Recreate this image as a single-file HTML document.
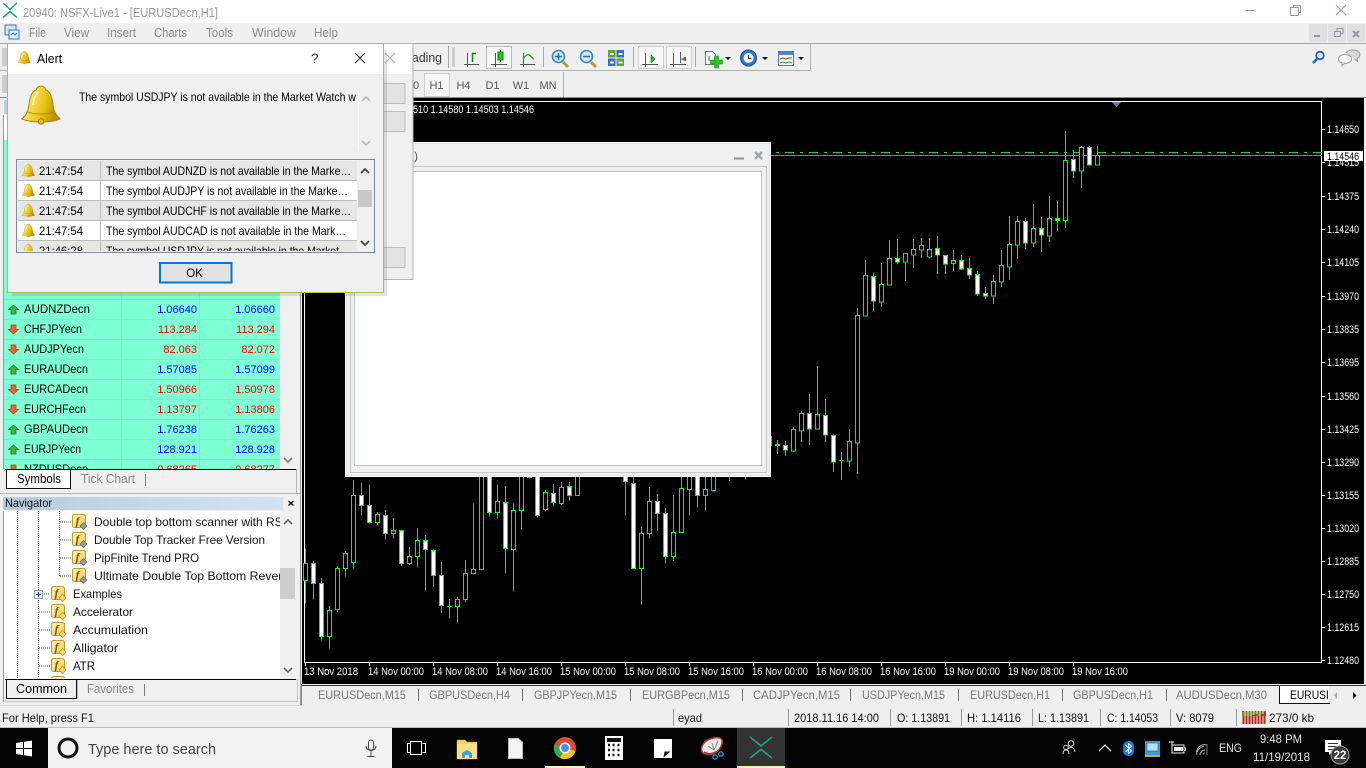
<!DOCTYPE html>
<html lang="en"><head><meta charset="utf-8"><title>20940: NSFX-Live1 - [EURUSDecn,H1]</title>
<style>
html,body{margin:0;padding:0;width:1366px;height:768px;overflow:hidden;background:#f0f0f0}
svg{display:block}
text{font-family:"Liberation Sans",Arial,sans-serif;font-size:12px;fill:#000}
.m{fill:#8c8c8c;font-size:12.5px}
.tf{fill:#555;font-size:11px;text-anchor:middle}
.ax text{fill:#fff;font-size:11px}
.mw{font-size:11.5px}
.bl{fill:#0000ff;font-size:11px;text-anchor:end}
.rd{fill:#ff0000;font-size:11px;text-anchor:end}
.tb{fill:#777;font-size:12px}
.st{fill:#111;font-size:12px}
.nv{font-size:12px;fill:#111}
</style></head><body>
<svg width="1366" height="768" viewBox="0 0 1366 768" xmlns="http://www.w3.org/2000/svg">
<defs>
<linearGradient id="gb" x1="0" y1="0" x2="1" y2="0.3"><stop offset="0" stop-color="#e9c92e"/><stop offset=".3" stop-color="#fbe35c"/><stop offset=".7" stop-color="#e8bf14"/><stop offset="1" stop-color="#c09206"/></linearGradient>
<linearGradient id="hd" x1="0" y1="0" x2="1" y2="0"><stop offset="0" stop-color="#b7cbdf"/><stop offset="1" stop-color="#d3e3f2"/></linearGradient>
<linearGradient id="fi" x1="0" y1="0" x2="1" y2="1"><stop offset="0" stop-color="#fff6c0"/><stop offset="1" stop-color="#f2c84a"/></linearGradient>
<g id="bell"><path d="M19 0c3 0 4 2 5 4 5 2 6 8 7 15 1 7 3 10 7 14-5 2-11 3-19 3S5 35 0 33c4-4 6-7 7-14 1-7 2-13 7-15 1-2 2-4 5-4z" fill="url(#gb)" stroke="#a88300"/><circle cx="19" cy="35.500" r="2.800" fill="#e3b91e" stroke="#a88300"/><path d="M5.500 26c8 2.600 19 2.600 27 0" fill="none" stroke="#b38f0c"/><path d="M11 19c.5-6 2-10 5-13" fill="none" stroke="#fff8c8" stroke-width="2"/></g>
<g id="fg"><rect x=".5" y=".5" width="13" height="13" rx="2" fill="url(#fi)" stroke="#c29a2c"/><text x="3.500" y="11" style="font-family:'Liberation Serif',serif;font-style:italic;font-size:12px;font-weight:bold;fill:#7a5a10">f</text><path d="M11.500 8.500l3.500 3.500-3.500 3.500-3.500-3.500z" fill="#9a9a9a" stroke="#666" stroke-width=".7"/></g>
<g id="fo"><rect x=".5" y=".5" width="13" height="13" rx="2" fill="url(#fi)" stroke="#c29a2c"/><text x="3.500" y="11" style="font-family:'Liberation Serif',serif;font-style:italic;font-size:12px;font-weight:bold;fill:#7a5a10">f</text><path d="M11.500 8.500l3.500 3.500-3.500 3.500-3.500-3.500z" fill="#f6d868" stroke="#c09428" stroke-width=".8"/></g>
<path id="up" d="M5.500 0l5 4.500H8V9H3V4.500H.5z" fill="#45b045" stroke="#1d6f1d" stroke-width=".7"/>
<path id="dn" d="M3 0h5v4.500h2.500l-5 4.500-5-4.500H3z" fill="#f4602a" stroke="#b63a12" stroke-width=".7"/>
<clipPath id="cl"><rect x="17" y="161" width="340" height="90"/></clipPath>
<clipPath id="cm"><rect x="4" y="290" width="276" height="179"/></clipPath>
<clipPath id="ctab"><rect x="1280" y="686" width="48" height="18"/></clipPath>
<clipPath id="cnv"><rect x="4" y="511" width="276" height="167"/></clipPath>
</defs>

<rect width="1366" height="768" fill="#f0f0f0"/>

<!-- title bar -->
<rect width="1366" height="23" fill="#fff"/>
<path d="M3 3l7 6.500L17 3M3 17.500l7-6 7 6" fill="none" stroke="#1ea57f" stroke-width="1.500"/>
<text x="23" y="17" textLength="195" lengthAdjust="spacingAndGlyphs" style="fill:#999;font-size:13px">20940: NSFX-Live1 - [EURUSDecn,H1]</text>
<path d="M1245 10.500h10" stroke="#999" fill="none"/>
<path d="M1290.500 7.500h8v8h-8zM1293.500 7V5.500h7v7h-2" stroke="#999" fill="none"/>
<path d="M1336 5l10 10M1346 5l-10 10" stroke="#999" fill="none"/>

<!-- menu -->
<rect y="23" width="1366" height="20" fill="#efefef"/>
<rect x="5" y="25" width="11" height="10" fill="#cfe3f5" stroke="#3f77b5"/><rect x="9" y="30" width="10" height="9" fill="#dcebf8" stroke="#3f77b5"/><path d="M11 35l2-2 2 2 2-2" stroke="#3f77b5" fill="none"/>
<text class="m" x="29" y="37" textLength="17" lengthAdjust="spacingAndGlyphs">File</text>
<text class="m" x="64" y="37" textLength="25" lengthAdjust="spacingAndGlyphs">View</text>
<text class="m" x="107" y="37" textLength="29" lengthAdjust="spacingAndGlyphs">Insert</text>
<text class="m" x="154" y="37" textLength="33" lengthAdjust="spacingAndGlyphs">Charts</text>
<text class="m" x="206" y="37" textLength="27" lengthAdjust="spacingAndGlyphs">Tools</text>
<text class="m" x="252" y="37" textLength="44" lengthAdjust="spacingAndGlyphs">Window</text>
<text class="m" x="314" y="37" textLength="24" lengthAdjust="spacingAndGlyphs">Help</text>
<rect x="1309" y="24" width="18" height="18" fill="#e0e0e0"/><rect x="1328" y="24" width="18" height="18" fill="#e0e0e0"/><rect x="1347" y="24" width="18" height="18" fill="#e0e0e0"/>
<path d="M1314 36h6" stroke="#8a99a8" stroke-width="2"/><path d="M1334.500 31.500h6v5h-6zM1337 31v-2.500h6v5h-2" stroke="#8a99a8" fill="none"/><path d="M1353 31l6 6M1359 31l-6 6" stroke="#8a99a8" stroke-width="2"/>
<rect y="43" width="1366" height="1" fill="#a6a6a6"/>

<!-- toolbars -->
<rect y="44" width="1366" height="54" fill="#efefef"/>
<path d="M0 70.500H810.500V44" stroke="#b0b0b0" fill="none"/>
<path d="M563.500 72V97" stroke="#b0b0b0"/>
<rect y="97" width="1366" height="1" fill="#8a8a8a"/>
<path d="M2 49h5M2 51h5M2 53h5M2 55h5M2 57h5M2 59h5M2 61h5M2 63h5M2 65h5M2 76h5M2 78h5M2 80h5M2 82h5M2 84h5M2 86h5M2 88h5M2 90h5M2 92h5" stroke="#aaa" fill="none"/>
<text x="412" y="62" textLength="30" lengthAdjust="spacingAndGlyphs" style="fill:#333;font-size:12.500px">ading</text>
<path d="M448.500 46V68M543.500 47V67M633.500 47V67M695.500 47V67" stroke="#aaa" fill="none"/>
<path d="M452 48h3M452 50h3M452 52h3M452 54h3M452 56h3M452 58h3M452 60h3M452 62h3M452 64h3M452 66h3" stroke="#aaa" fill="none"/>
<!-- bar icon -->
<path d="M467.500 53V67M464 64.500H479" stroke="#555" fill="none"/><path d="M472.500 62V53.500H476" stroke="#0a8a0a" stroke-width="1.500" fill="none"/>
<!-- candle selected -->
<rect x="486.500" y="46.500" width="25" height="22" fill="#f7f7f7" stroke="#bbb"/>
<path d="M495.500 53V67M491 64.500H507" stroke="#555" fill="none"/><path d="M500.500 50V62" stroke="#0a8a0a"/><rect x="498" y="52" width="5" height="8" fill="#22c322" stroke="#0a8a0a"/>
<!-- line icon -->
<path d="M523.500 53V67M520 64.500H535" stroke="#555" fill="none"/><path d="M523 59c2-3 4-5 6-4s3 3 5 4" stroke="#2d9a3d" stroke-width="1.300" fill="none"/>
<!-- zoom -->
<g><path d="M563 62l5 5" stroke="#b89a3a" stroke-width="3"/><circle cx="558.500" cy="56.500" r="6" fill="#cfe6f8" stroke="#3a86c8" stroke-width="1.600"/><path d="M555 56.500h7M558.500 53v7" stroke="#2b6aa8" stroke-width="1.500"/></g>
<g><path d="M591 62l5 5" stroke="#b89a3a" stroke-width="3"/><circle cx="586.500" cy="56.500" r="6" fill="#cfe6f8" stroke="#3a86c8" stroke-width="1.600"/><path d="M583 56.500h7" stroke="#2b6aa8" stroke-width="1.500"/></g>
<!-- tile -->
<rect x="608" y="50" width="7.500" height="7.500" fill="#5aa82a"/><rect x="616.500" y="50" width="7.500" height="7.500" fill="#2e6fd0"/><rect x="608" y="58.500" width="7.500" height="7.500" fill="#2e6fd0"/><rect x="616.500" y="58.500" width="7.500" height="7.500" fill="#5aa82a"/>
<path d="M610 54h4M618.500 54h4M610 62.500h4M618.500 62.500h4" stroke="#fff" stroke-width="2"/>
<!-- chart shift -->
<rect x="638.500" y="46.500" width="25" height="22" fill="#f7f7f7" stroke="#ccc"/>
<path d="M645.500 53V67M642 64.500H658" stroke="#555" fill="none"/><path d="M651 55l4 4-4 4z" fill="#22b322" stroke="#0a8a0a" stroke-width=".6"/>
<rect x="666.500" y="46.500" width="25" height="22" fill="#f7f7f7" stroke="#ccc"/>
<path d="M673.500 53V67M670 64.500H686" stroke="#555" fill="none"/><path d="M680.500 52V63" stroke="#2b6aa8"/><path d="M681 59l5-2.500v5z" fill="#c8401a"/>
<!-- new chart -->
<path d="M705.500 51.500h7l3 3v10h-10z" fill="#fff" stroke="#777"/><path d="M709 56v5" stroke="#555"/>
<path d="M714 57h4v4h4v4h-4v4h-4v-4h-4v-4h4z" fill="#2fc02f" stroke="#0f8a0f" stroke-width=".6" transform="translate(.5 -1)"/>
<path d="M725 57h6l-3 3z M762 57h6l-3 3z M798 57h6l-3 3z" fill="#111"/>
<!-- clock -->
<circle cx="748.500" cy="58" r="8" fill="#2a78c8" stroke="#154f90"/><circle cx="748.500" cy="58" r="5" fill="#f4f4f4"/><path d="M748.500 55v3.500h3" stroke="#333" fill="none"/>
<!-- template -->
<rect x="778.500" y="51.500" width="15" height="14" fill="#f4f8fc" stroke="#4a7fb5"/><rect x="779" y="52" width="14" height="3" fill="#4a86c8"/><path d="M780 59l3-1 3 1 3-1 3 0" stroke="#a03c1c" fill="none"/><path d="M780 63l3-1 3 1 3-1 3 1" stroke="#2d9a3d" fill="none"/>
<!-- timeframes -->
<rect x="424.500" y="73.500" width="25" height="23" fill="#f7f7f7" stroke="#ccc"/>
<text class="tf" x="436.500" y="89">H1</text><text class="tf" x="463.500" y="89">H4</text><text class="tf" x="492.500" y="89">D1</text><text class="tf" x="521" y="89">W1</text><text class="tf" x="548" y="89">MN</text>
<!-- right icons -->
<circle cx="1320" cy="55.500" r="3.800" fill="#dfeafa" stroke="#2a62c0" stroke-width="1.800"/><path d="M1317 59l-4 4" stroke="#2a62c0" stroke-width="2.500"/>
<path d="M1346 53c1-2 4-3 7-3 4 0 7 2 7 4.500 0 2-1 3-3 4l.5 3-3-2.500" fill="#d8d8d8" stroke="#999"/><ellipse cx="1345" cy="59" rx="6.500" ry="4.500" fill="#f6f6f6" stroke="#999"/><path d="M1342 63v2.500l3-2.500" fill="#f6f6f6" stroke="#999"/>

<!-- chart -->
<rect x="302" y="98" width="1062" height="586" fill="#000"/>
<path d="M304.500 101.500H1321.500V662.500H304.500Z" fill="none" stroke="#fff"/>
<path d="M1112 102h9l-4.500 5z" fill="#708090"/>
<text x="413" y="113" textLength="121" lengthAdjust="spacingAndGlyphs" style="fill:#fff;font-size:11px">510 1.14580 1.14503 1.14546</text>
<path d="M761 152.500H1322" stroke="#14d814" stroke-dasharray="9 6 3 6" fill="none"/>
<path d="M304 155.500H1322" stroke="#808080" fill="none"/>

<g transform="translate(760.170 120.170) scale(.33333)" stroke="#00ff00" stroke-width="3" shape-rendering="crispEdges">
<path fill="none" d="M1012 78V136M988 78V134M964 78V203M940 90V173M916 33V323M892 243V333M868 228V365M844 291V395M820 252V380M796 294V386M772 288V416M748 288V479M724 390V500M700 465V551M676 501V537M652 453V527M628 414V476M604 405V449M580 390V452M556 406V461M532 348V461M508 354V413M484 354V413M460 357V443M436 400V482M412 357V431M388 360V494M364 429V560M340 457V572M316 420V587M292 564V1061M268 927V1040M244 996V1079M220 943V1055M196 837V965M172 738V926M148 822V974M124 873V965M100 921V995M76 963V1007M52 960V1001M34 948V978M238 1021h12"/>
<path fill="#000" d="M1006 106h12v28h-12zM958 82h12v70h-12zM910 121h12v180h-12zM862 295h12v52h-12zM814 325h12v43h-12zM766 304h12v70h-12zM742 373h12v67h-12zM718 436h12v49h-12zM694 484h12v43h-12zM574 421h12v9h-12zM502 388h12v22h-12zM478 376h12v13h-12zM454 388h12v16h-12zM430 400h12v25h-12zM382 415h12v79h-12zM358 493h12v52h-12zM310 466h12v121h-12zM286 586h12v382h-12zM262 964h12v58h-12zM166 883h12v43h-12zM118 880h12v52h-12zM94 928h12v64h-12z"/>
<path fill="#fff" d="M982 82h12v52h-12zM934 118h12v34h-12zM886 295h12v6h-12zM838 325h12v19h-12zM790 304h12v64h-12zM670 520h12v7h-12zM646 463h12v58h-12zM622 445h12v19h-12zM598 421h12v25h-12zM550 406h12v25h-12zM526 385h12v19h-12zM406 415h12v10h-12zM334 469h12v73h-12zM214 946h12v79h-12zM190 886h12v58h-12zM142 880h12v46h-12zM70 976h12v13h-12zM46 973h12v3h-12z"/>
</g>
<g transform="translate(300.170 470) scale(.33333)" stroke="#00ff00" stroke-width="3" shape-rendering="crispEdges">
<path fill="none" d="M16 235V400M40 273V389M64 324V512M88 408V536M112 288V428M136 243V320M160 30V296M184 38V137M208 44V160M232 126V165M256 120V209M280 144V206M304 180V290M328 231V285M352 174V293M376 195V362M400 238V351M424 276V429M448 387V446M472 379V458M496 270V398M520 101V313M544 0V299M568 0V140M592 44V146M616 48V311M640 100V365M664 0V179M688 0V25M712 0V143M736 60V125M760 42V110M784 36V105M808 36V92M832 0V76M976 0V137M1000 0V296M1024 170V404M1048 51V206M1072 72V183M1096 114V281M1120 75V273M1144 0V187M1168 0V137M1192 0V112M1216 20V122M1240 0V62M1288 0V33M1336 0V29M442 409h12"/>
<path fill="#000" d="M10 280h12v52h-12zM82 421h12v79h-12zM106 295h12v124h-12zM130 250h12v46h-12zM154 76h12v201h-12zM226 133h12v25h-12zM274 181h12v9h-12zM322 259h12v22h-12zM346 211h12v49h-12zM466 388h12v22h-12zM490 310h12v79h-12zM514 298h12v12h-12zM538 0h12v299h-12zM586 94h12v34h-12zM634 121h12v118h-12zM658 0h12v122h-12zM730 67h12v52h-12zM778 52h12v49h-12zM826 0h12v76h-12zM1018 190h12v106h-12zM1042 94h12v96h-12zM1114 187h12v72h-12zM1138 55h12v132h-12zM1162 0h12v58h-12zM1210 58h12v18h-12zM1234 0h12v62h-12z"/>
<path fill="#fff" d="M34 280h12v61h-12zM58 340h12v159h-12zM178 76h12v31h-12zM202 106h12v52h-12zM250 136h12v54h-12zM298 181h12v100h-12zM370 211h12v27h-12zM394 241h12v75h-12zM418 316h12v90h-12zM562 0h12v127h-12zM610 97h12v138h-12zM682 0h12v22h-12zM706 0h12v136h-12zM754 70h12v28h-12zM802 49h12v27h-12zM970 0h12v34h-12zM994 40h12v256h-12zM1066 94h12v36h-12zM1090 130h12v129h-12zM1186 0h12v76h-12z"/>
</g>

<!-- axes -->
<g class="ax">
<path d="M1322 129.500h3M1322 162.500h3M1322 196.500h3M1322 229.500h3M1322 262.500h3M1322 296.500h3M1322 329.500h3M1322 362.500h3M1322 396.500h3M1322 429.500h3M1322 462.500h3M1322 495.500h3M1322 528.500h3M1322 561.500h3M1322 594.500h3M1322 627.500h3M1322 660.500h3M305.500 663v3M369.500 663v3M433.500 663v3M497.500 663v3M561.500 663v3M625.500 663v3M689.500 663v3M753.500 663v3M817.500 663v3M881.500 663v3M945.500 663v3M1009.500 663v3M1073.500 663v3" stroke="#fff" fill="none"/>
<text x="1327" y="133" textLength="32" lengthAdjust="spacingAndGlyphs">1.14650</text>
<text x="1327" y="166" textLength="32" lengthAdjust="spacingAndGlyphs">1.14515</text>
<text x="1327" y="200" textLength="32" lengthAdjust="spacingAndGlyphs">1.14375</text>
<text x="1327" y="233" textLength="32" lengthAdjust="spacingAndGlyphs">1.14240</text>
<text x="1327" y="266" textLength="32" lengthAdjust="spacingAndGlyphs">1.14105</text>
<text x="1327" y="300" textLength="32" lengthAdjust="spacingAndGlyphs">1.13970</text>
<text x="1327" y="333" textLength="32" lengthAdjust="spacingAndGlyphs">1.13835</text>
<text x="1327" y="366" textLength="32" lengthAdjust="spacingAndGlyphs">1.13695</text>
<text x="1327" y="400" textLength="32" lengthAdjust="spacingAndGlyphs">1.13560</text>
<text x="1327" y="433" textLength="32" lengthAdjust="spacingAndGlyphs">1.13425</text>
<text x="1327" y="466" textLength="32" lengthAdjust="spacingAndGlyphs">1.13290</text>
<text x="1327" y="499" textLength="32" lengthAdjust="spacingAndGlyphs">1.13155</text>
<text x="1327" y="532" textLength="32" lengthAdjust="spacingAndGlyphs">1.13020</text>
<text x="1327" y="565" textLength="32" lengthAdjust="spacingAndGlyphs">1.12885</text>
<text x="1327" y="598" textLength="32" lengthAdjust="spacingAndGlyphs">1.12750</text>
<text x="1327" y="631" textLength="32" lengthAdjust="spacingAndGlyphs">1.12615</text>
<text x="1327" y="664" textLength="32" lengthAdjust="spacingAndGlyphs">1.12480</text>
<text x="304" y="675" textLength="54" lengthAdjust="spacingAndGlyphs">13 Nov 2018</text>
<text x="368" y="675" textLength="56" lengthAdjust="spacingAndGlyphs">14 Nov 00:00</text>
<text x="432" y="675" textLength="56" lengthAdjust="spacingAndGlyphs">14 Nov 08:00</text>
<text x="496" y="675" textLength="56" lengthAdjust="spacingAndGlyphs">14 Nov 16:00</text>
<text x="560" y="675" textLength="56" lengthAdjust="spacingAndGlyphs">15 Nov 00:00</text>
<text x="624" y="675" textLength="56" lengthAdjust="spacingAndGlyphs">15 Nov 08:00</text>
<text x="688" y="675" textLength="56" lengthAdjust="spacingAndGlyphs">15 Nov 16:00</text>
<text x="752" y="675" textLength="56" lengthAdjust="spacingAndGlyphs">16 Nov 00:00</text>
<text x="816" y="675" textLength="56" lengthAdjust="spacingAndGlyphs">16 Nov 08:00</text>
<text x="880" y="675" textLength="56" lengthAdjust="spacingAndGlyphs">16 Nov 16:00</text>
<text x="944" y="675" textLength="56" lengthAdjust="spacingAndGlyphs">19 Nov 00:00</text>
<text x="1008" y="675" textLength="56" lengthAdjust="spacingAndGlyphs">19 Nov 08:00</text>
<text x="1072" y="675" textLength="56" lengthAdjust="spacingAndGlyphs">19 Nov 16:00</text>
</g>
<rect x="1324" y="151" width="39" height="10" fill="#fff"/>
<text x="1327" y="160" textLength="32" lengthAdjust="spacingAndGlyphs" style="fill:#000;font-size:11px">1.14546</text>

<!-- floating chart window -->
<rect x="345.500" y="142.500" width="425" height="334" fill="#f0f0f0" stroke="#fff"/>
<rect x="346.500" y="143.500" width="423" height="332" fill="none" stroke="#e3e3e3"/>
<rect x="350.500" y="166.500" width="416" height="306" fill="#f0f0f0" stroke="#c6c6c6"/>
<rect x="354.500" y="171.500" width="407" height="294" fill="#fff" stroke="#b7c4d0"/>
<path d="M734 158.500h10" stroke="#8f8f8f" stroke-width="2"/>
<path d="M755 152l7 7M762 152l-7 7" stroke="#9aa7b1" stroke-width="2.500"/>
<text x="406" y="160" style="fill:#555;font-size:12px">S)</text>

<!-- left panel -->
<rect x="0" y="98" width="302" height="610" fill="#f0f0f0"/>
<path d="M300.500 98V705" stroke="#9a9a9a" fill="none"/>
<rect x="4" y="100" width="6" height="14" fill="#c3ced9"/>
<rect x="3" y="115" width="8" height="25" fill="#fff"/>
<path d="M3.500 115V469" stroke="#999"/>
<rect x="4" y="140" width="276" height="329" fill="#7fffd4"/>
<path d="M4 299.500H280M4 319.500H280M4 339.500H280M4 359.500H280M4 379.500H280M4 399.500H280M4 419.500H280M4 439.500H280M4 459.500H280M121.500 290V469M199.500 290V469" stroke="#c3c9c9" fill="none"/>
<g clip-path="url(#cm)">
<use href="#up" x="8" y="305"/><text class="mw" x="24" y="313" textLength="66" lengthAdjust="spacingAndGlyphs">AUDNZDecn</text><text class="bl" x="197" y="313">1.06640</text><text class="bl" x="275" y="313">1.06660</text>
<use href="#dn" x="8" y="325"/><text class="mw" x="24" y="333" textLength="58" lengthAdjust="spacingAndGlyphs">CHFJPYecn</text><text class="rd" x="197" y="333">113.284</text><text class="rd" x="275" y="333">113.294</text>
<use href="#dn" x="8" y="345"/><text class="mw" x="24" y="353" textLength="60" lengthAdjust="spacingAndGlyphs">AUDJPYecn</text><text class="rd" x="197" y="353">82.063</text><text class="rd" x="275" y="353">82.072</text>
<use href="#up" x="8" y="365"/><text class="mw" x="24" y="373" textLength="64" lengthAdjust="spacingAndGlyphs">EURAUDecn</text><text class="bl" x="197" y="373">1.57085</text><text class="bl" x="275" y="373">1.57099</text>
<use href="#dn" x="8" y="385"/><text class="mw" x="24" y="393" textLength="64" lengthAdjust="spacingAndGlyphs">EURCADecn</text><text class="rd" x="197" y="393">1.50966</text><text class="rd" x="275" y="393">1.50978</text>
<use href="#dn" x="8" y="405"/><text class="mw" x="24" y="413" textLength="62" lengthAdjust="spacingAndGlyphs">EURCHFecn</text><text class="rd" x="197" y="413">1.13797</text><text class="rd" x="275" y="413">1.13806</text>
<use href="#up" x="8" y="425"/><text class="mw" x="24" y="433" textLength="64" lengthAdjust="spacingAndGlyphs">GBPAUDecn</text><text class="bl" x="197" y="433">1.76238</text><text class="bl" x="275" y="433">1.76263</text>
<use href="#up" x="8" y="445"/><text class="mw" x="24" y="453" textLength="57" lengthAdjust="spacingAndGlyphs">EURJPYecn</text><text class="bl" x="197" y="453">128.921</text><text class="bl" x="275" y="453">128.928</text>
<use href="#dn" x="8" y="465"/><text class="mw" x="24" y="473" textLength="64" lengthAdjust="spacingAndGlyphs">NZDUSDecn</text><text class="rd" x="197" y="473">0.68265</text><text class="rd" x="275" y="473">0.68277</text>
</g>
<path d="M284 458l4 4 4-4" stroke="#777" stroke-width="1.600" fill="none"/>
<path d="M5 469.500H296" stroke="#000" fill="none"/>
<path d="M6.500 470V488.500H70.500V470" fill="#fff" stroke="#111"/>
<text x="17" y="483" textLength="44" lengthAdjust="spacingAndGlyphs" style="font-size:12.500px">Symbols</text>
<text x="81" y="483" textLength="54" lengthAdjust="spacingAndGlyphs" style="fill:#888;font-size:12.500px">Tick Chart</text>
<path d="M145.500 474V486" stroke="#777"/>
<path d="M296.500 469V493M0 493.500H300" stroke="#b5b5b5" fill="none"/>

<!-- navigator -->
<rect x="3" y="497" width="280" height="13" fill="url(#hd)"/>
<text x="5" y="507" textLength="47" lengthAdjust="spacingAndGlyphs" style="fill:#111;font-size:12px">Navigator</text>
<path d="M288.500 501l5 4.500M293.500 501l-5 4.500" stroke="#111" stroke-width="1.500"/>
<rect x="4" y="511" width="276" height="168" fill="#fff"/>
<path d="M3.500 511V702" stroke="#999"/>
<g clip-path="url(#cnv)">
<path d="M17.500 511V678M38.500 511V590M38.500 600V678M59.500 511V576M60 522h11M60 540h11M60 558h11M60 576h11M44 594h6M39 612h11M39 630h11M39 648h11M39 666h11" stroke="#555" stroke-dasharray="1 1" fill="none"/>
<use href="#fg" x="72" y="514"/><text class="nv" x="94" y="526" textLength="192" lengthAdjust="spacingAndGlyphs">Double top bottom scanner with RSI</text>
<use href="#fg" x="72" y="532"/><text class="nv" x="94" y="544" textLength="171" lengthAdjust="spacingAndGlyphs">Double Top Tracker Free Version</text>
<use href="#fg" x="72" y="550"/><text class="nv" x="94" y="562" textLength="105" lengthAdjust="spacingAndGlyphs">PipFinite Trend PRO</text>
<use href="#fg" x="72" y="568"/><text class="nv" x="94" y="580" textLength="204" lengthAdjust="spacingAndGlyphs">Ultimate Double Top Bottom Reversal</text>
<rect x="34.500" y="590.500" width="8" height="8" fill="#f4f4f4" stroke="#999"/><path d="M36 594.500h5M38.500 592v5" stroke="#23418f"/>
<use href="#fo" x="51" y="586"/><text class="nv" x="73" y="598" textLength="49" lengthAdjust="spacingAndGlyphs">Examples</text>
<use href="#fo" x="51" y="604"/><text class="nv" x="73" y="616" textLength="60" lengthAdjust="spacingAndGlyphs">Accelerator</text>
<use href="#fo" x="51" y="622"/><text class="nv" x="73" y="634" textLength="75" lengthAdjust="spacingAndGlyphs">Accumulation</text>
<use href="#fo" x="51" y="640"/><text class="nv" x="73" y="652" textLength="45" lengthAdjust="spacingAndGlyphs">Alligator</text>
<use href="#fo" x="51" y="658"/><text class="nv" x="73" y="670" textLength="22" lengthAdjust="spacingAndGlyphs">ATR</text>
<use href="#fo" x="51" y="676"/>
</g>
<rect x="280" y="511" width="16" height="168" fill="#f0f0f0"/>
<rect x="280" y="568" width="15" height="31" fill="#cdcdcd"/>
<path d="M284 524l4-4 4 4M284 668l4 4 4-4" stroke="#666" stroke-width="1.600" fill="none"/>
<path d="M5 679.500H296" stroke="#000" fill="none"/>
<rect x="6" y="680" width="71" height="18" fill="#f0f0f0"/>
<path d="M6.500 680V698.500H76.500V680" fill="none" stroke="#111"/><path d="M77.500 680V699" stroke="#bbb"/>
<text x="16" y="693" textLength="51" lengthAdjust="spacingAndGlyphs" style="font-size:12.500px">Common</text>
<text x="87" y="693" textLength="47" lengthAdjust="spacingAndGlyphs" style="fill:#888;font-size:12.500px">Favorites</text>
<path d="M144.500 684V696" stroke="#777"/>
<path d="M3 701.500H297M297.500 679V702" stroke="#c5c5c5" fill="none"/>

<!-- chart tabs -->
<rect x="302" y="684" width="1064" height="21" fill="#efefef"/>
<path d="M302 685.500H1366" stroke="#333" fill="none"/>
<path d="M301.500 684V705" stroke="#888"/>
<text class="tb" x="318" y="699" textLength="88" lengthAdjust="spacingAndGlyphs">EURUSDecn,M15</text>
<text class="tb" x="429" y="699" textLength="81" lengthAdjust="spacingAndGlyphs">GBPUSDecn,H4</text>
<text class="tb" x="534" y="699" textLength="83" lengthAdjust="spacingAndGlyphs">GBPJPYecn,M15</text>
<text class="tb" x="642" y="699" textLength="88" lengthAdjust="spacingAndGlyphs">EURGBPecn,M15</text>
<text class="tb" x="753" y="699" textLength="87" lengthAdjust="spacingAndGlyphs">CADJPYecn,M15</text>
<text class="tb" x="862" y="699" textLength="83" lengthAdjust="spacingAndGlyphs">USDJPYecn,M15</text>
<text class="tb" x="970" y="699" textLength="80" lengthAdjust="spacingAndGlyphs">EURUSDecn,H1</text>
<text class="tb" x="1073" y="699" textLength="80" lengthAdjust="spacingAndGlyphs">GBPUSDecn,H1</text>
<text class="tb" x="1176" y="699" textLength="91" lengthAdjust="spacingAndGlyphs">AUDUSDecn,M30</text>
<path d="M418.500 689V701M522.500 689V701M630.500 689V701M742.500 689V701M850.500 689V701M958.500 689V701M1062.500 689V701M1166.500 689V701" stroke="#777"/>
<rect x="1279" y="686" width="87" height="17" fill="#fff"/>
<rect x="1329" y="686" width="37" height="18" fill="#efefef"/>
<path d="M1279.500 686V703.500H1330" fill="none" stroke="#111"/>
<g clip-path="url(#ctab)"><text x="1290" y="699" textLength="76" lengthAdjust="spacingAndGlyphs" style="fill:#000;font-size:12px">EURUSDecn,H1</text></g>
<path d="M1337 692v7l-3-3.500z" fill="#aaa"/><path d="M1353 692v7l3.500-3.500z" fill="#111"/>

<!-- status bar -->
<rect y="705" width="1366" height="23" fill="#efefef"/>
<path d="M0 705.500H302" stroke="#d8d8d8"/>
<text class="st" x="2" y="722" textLength="92" lengthAdjust="spacingAndGlyphs">For Help, press F1</text>
<path d="M673.500 709V726M788.500 709V726M890.500 709V726M961.500 709V726M1032.500 709V726M1100.500 709V726M1170.500 709V726M1236.500 709V726" stroke="#999"/>
<text class="st" x="678" y="722" textLength="24" lengthAdjust="spacingAndGlyphs">eyad</text>
<text class="st" x="794" y="722" textLength="85" lengthAdjust="spacingAndGlyphs">2018.11.16 14:00</text>
<text class="st" x="897" y="722" textLength="53" lengthAdjust="spacingAndGlyphs">O: 1.13891</text>
<text class="st" x="967" y="722" textLength="54" lengthAdjust="spacingAndGlyphs">H: 1.14116</text>
<text class="st" x="1038" y="722" textLength="51" lengthAdjust="spacingAndGlyphs">L: 1.13891</text>
<text class="st" x="1107" y="722" textLength="51" lengthAdjust="spacingAndGlyphs">C: 1.14053</text>
<text class="st" x="1176" y="722" textLength="38" lengthAdjust="spacingAndGlyphs">V: 8079</text>
<rect x="1242" y="711" width="24" height="5" fill="#6f8a14"/>
<path d="M1243.500 716v8M1246.500 716v8M1249.500 716v8M1252.500 715v9M1255.500 714v10M1258.500 716v8M1261.500 714v10M1264.500 712v12" stroke="#b22a14" stroke-width="2"/>
<path d="M1245 711v6M1248 711v6M1251 711v6M1254 711v4M1257 711v3M1260 711v6M1263 711v3" stroke="#efefef" stroke-width="1"/>
<text class="st" x="1269" y="722" textLength="45" lengthAdjust="spacingAndGlyphs">273/0 kb</text>
<path d="M0 727.500H1366" stroke="#bdbdbd"/>

<!-- background dialog -->
<rect x="383" y="43.500" width="30" height="236" fill="#f0f0f0" stroke="#b5b5b5"/>
<rect x="384" y="44" width="28" height="30" fill="#fff"/>
<path d="M385 53l10 10M395 53l-10 10" stroke="#aaa" fill="none"/>
<rect x="370" y="83.500" width="35" height="20" fill="#e3e3e3" stroke="#bbb"/>
<rect x="370" y="111.500" width="35" height="20" fill="#e3e3e3" stroke="#bbb"/>
<rect x="370" y="247.500" width="35" height="20" fill="#e3e3e3" stroke="#bbb"/>
<text x="413" y="89" style="fill:#555;font-size:11px">0</text>

<!-- alert dialog -->
<rect x="12" y="50" width="375" height="246" fill="#000" opacity=".1"/>
<rect x="7.500" y="43.500" width="376" height="249" fill="#f0f0f0" stroke="#a9c04a"/>
<rect x="8" y="44" width="375" height="30" fill="#fff"/>
<use href="#bell" transform="translate(18 51) scale(.34)"/>
<text x="37" y="63" textLength="25" lengthAdjust="spacingAndGlyphs" style="font-size:13px">Alert</text>
<text x="311" y="63" style="font-size:13.500px;fill:#222">?</text>
<path d="M355 53l10 10M365 53l-10 10" stroke="#222" fill="none"/>
<use href="#bell" transform="translate(22 86)"/>
<text x="79" y="101" textLength="277" lengthAdjust="spacingAndGlyphs">The symbol USDJPY is not available in the Market Watch w</text>
<path d="M358.500 90V151" stroke="#fff"/>
<path d="M362 101l4-4 4 4M362 141l4 4 4-4" stroke="#bbb" stroke-width="1.600" fill="none"/>
<rect x="16.500" y="159.500" width="358" height="93" fill="#f0f0f0" stroke="#7c8a99"/>
<rect x="18" y="161" width="339" height="19" fill="#e6e6e6"/><rect x="18" y="181" width="339" height="19" fill="#fff"/><rect x="18" y="201" width="339" height="19" fill="#e6e6e6"/><rect x="18" y="221" width="339" height="19" fill="#fff"/><rect x="18" y="241" width="339" height="10" fill="#e6e6e6"/>
<path d="M18 180.500H357M18 200.500H357M18 220.500H357M18 240.500H357M100.500 161V251" stroke="#bbb" fill="none"/>
<g clip-path="url(#cl)">
<use href="#bell" transform="translate(22 164) scale(.34)"/><text x="39" y="175" textLength="44" lengthAdjust="spacingAndGlyphs">21:47:54</text><text x="106" y="175" textLength="245" lengthAdjust="spacingAndGlyphs">The symbol AUDNZD is not available in the Marke…</text>
<use href="#bell" transform="translate(22 184) scale(.34)"/><text x="39" y="195" textLength="44" lengthAdjust="spacingAndGlyphs">21:47:54</text><text x="106" y="195" textLength="242" lengthAdjust="spacingAndGlyphs">The symbol AUDJPY is not available in the Marke…</text>
<use href="#bell" transform="translate(22 204) scale(.34)"/><text x="39" y="215" textLength="44" lengthAdjust="spacingAndGlyphs">21:47:54</text><text x="106" y="215" textLength="245" lengthAdjust="spacingAndGlyphs">The symbol AUDCHF is not available in the Marke…</text>
<use href="#bell" transform="translate(22 224) scale(.34)"/><text x="39" y="235" textLength="44" lengthAdjust="spacingAndGlyphs">21:47:54</text><text x="106" y="235" textLength="240" lengthAdjust="spacingAndGlyphs">The symbol AUDCAD is not available in the Mark…</text>
<use href="#bell" transform="translate(22 244) scale(.34)"/><text x="39" y="255" textLength="44" lengthAdjust="spacingAndGlyphs">21:46:28</text><text x="106" y="255" textLength="233" lengthAdjust="spacingAndGlyphs">The symbol USDJPY is not available in the Market</text>
</g>
<rect x="358" y="190" width="14" height="17" fill="#c8c8c8"/>
<path d="M361 173l4-4 4 4M361 241l4 4 4-4" stroke="#444" stroke-width="1.800" fill="none"/>
<rect x="160" y="263" width="71.500" height="19.500" fill="#e1e1e1" stroke="#0078d7" stroke-width="2"/>
<text x="194.500" y="277" text-anchor="middle" style="font-size:11.500px">OK</text>

<!-- taskbar -->
<rect y="728" width="1366" height="40" fill="#030303"/>
<path d="M16 743l7-1v6h-7zM24 741.800l8-1.200v7.400h-8zM16 749h7v6l-7-1zM24 749h8v7.500l-8-1.200z" fill="#fff"/>
<rect x="48" y="728" width="344" height="40" fill="#f2f2f2"/>
<circle cx="68" cy="748" r="9" fill="none" stroke="#111" stroke-width="3"/>
<text x="88" y="754" textLength="128" lengthAdjust="spacingAndGlyphs" style="fill:#444;font-size:15px">Type here to search</text>
<rect x="368.500" y="740" width="5" height="10" rx="2.500" fill="none" stroke="#444"/><path d="M366 746c0 6 10 6 10 0M371 751v5M367.500 756.500h7" fill="none" stroke="#444"/>
<!-- task view -->
<path d="M410.500 743.500h-3v9h3M422.500 743.500h3v9h-3" stroke="#fff" fill="none"/><rect x="410.500" y="741.500" width="11" height="13" fill="none" stroke="#fff"/>
<!-- folder -->
<path d="M457 740h8l2 2h10v17h-20z" fill="#f6d25e" stroke="#c79f34" stroke-width=".5"/><path d="M457 744h20v15h-20z" fill="#fbe08a"/><path d="M462 758v-5l5-3 5 3v5h-3v-3h-4v3z" fill="#2fa6e0"/>
<!-- document -->
<path d="M508.500 738.500h10l4 4v16h-14z" fill="#f4f4f4" stroke="#bbb"/>
<!-- chrome -->
<circle cx="565" cy="748" r="11" fill="#dd4b39"/>
<path d="M565 748L575.500 751A11 11 0 0 1 560 758z" fill="#f5c518"/><path d="M565 748L560 758A11 11 0 0 1 554.500 744z" fill="#3aa757"/><circle cx="565" cy="748" r="5.500" fill="#fff"/><circle cx="565" cy="748" r="4" fill="#4a8df0"/>
<rect x="545" y="766" width="40" height="2" fill="#f3f6a8"/>
<!-- calculator -->
<rect x="605" y="736" width="18" height="24" fill="#fff"/><rect x="607" y="738" width="14" height="4" fill="#111"/>
<path d="M608 745h2M612.500 745h2M617.500 745h2M608 750h2M612.500 750h2M617.500 750h2M608 755h2M612.500 755h2M617.500 755h2" stroke="#111" stroke-width="2.400"/>
<!-- sticky -->
<path d="M654 739h18v12l-6 7h-12z" fill="#fff"/><path d="M664 758l8-7v7z" fill="#fff"/><path d="M663.500 757.500l7-6h-6z" fill="#111"/>
<!-- snip -->
<path d="M702 752c-2-5 2-11 8-13 5-2 11-2 12 1 1 4-2 10-7 13-5 2-11 2-13-1z" fill="#e9e9e9" stroke="#b33838" stroke-width="1.500"/><path d="M704 752c4 3 9 2 12 0" stroke="#a33" stroke-width="2" fill="none"/><path d="M712 743l2 7M718 741l-4 9M708 746l6 4" stroke="#888"/><circle cx="715" cy="757" r="2.200" fill="none" stroke="#2a92d8" stroke-width="1.300"/><circle cx="721" cy="754" r="2.200" fill="none" stroke="#2a92d8" stroke-width="1.300"/>
<!-- mt4 active -->
<rect x="737" y="728" width="48" height="40" fill="#333"/>
<path d="M750 737l11 9 11-9M750 758l11-8.500 11 8.500" fill="none" stroke="#1ea57f" stroke-width="1.600"/>
<rect x="737" y="766" width="48" height="2" fill="#f3f6a8"/>
<!-- tray -->
<circle cx="1071" cy="743.500" r="2.800" fill="none" stroke="#ddd"/><circle cx="1066" cy="747.500" r="2.300" fill="none" stroke="#ddd"/><path d="M1063 754c0-3 1.500-4 3-4s3 1 3 4M1068 749c1-2 5-2 6 0s1 2 1 3" fill="none" stroke="#ddd"/>
<path d="M1099 751l6-6 6 6" fill="none" stroke="#ddd" stroke-width="1.300"/>
<rect x="1123" y="741" width="11" height="15" rx="5" fill="#1a78e6"/><path d="M1125.500 745l6 6-3 2.500v-10l3 2.500-6 6" fill="none" stroke="#fff" stroke-width=".9"/>
<rect x="1145" y="741" width="15" height="15" fill="#3d9bd8"/><rect x="1147" y="743" width="11" height="8" fill="#b6e0f5" stroke="#1d6fa8" stroke-width=".7"/><path d="M1145 756h15" stroke="#d8a93a" stroke-width="2"/>
<rect x="1172" y="745" width="12" height="8" fill="none" stroke="#eee"/><rect x="1174" y="747" width="9" height="4" fill="#eee"/><path d="M1184 748h1.500v2h-1.500" stroke="#eee"/><path d="M1172 745v-3M1169 742h5" stroke="#eee" fill="none"/>
<path d="M1197 755a8 8 0 0 1 10-10M1197 752a11 11 0 0 1 7-6" fill="none" stroke="#aaa"/><path d="M1200 755a5 5 0 0 1 5-5" fill="none" stroke="#bbb"/><path d="M1203 755a2 2 0 0 1 2-2M1207 744v11" fill="none" stroke="#777"/>
<text x="1219" y="752" textLength="23" lengthAdjust="spacingAndGlyphs" style="fill:#e8e8e8;font-size:12px">ENG</text>
<text x="1260" y="743" textLength="42" lengthAdjust="spacingAndGlyphs" style="fill:#e8e8e8;font-size:12px">9:48 PM</text>
<text x="1253" y="761" textLength="57" lengthAdjust="spacingAndGlyphs" style="fill:#e8e8e8;font-size:12px">11/19/2018</text>
<path d="M1325 740h16v12h-9l-3 3v-3h-4z" fill="#fff"/><path d="M1328 743.500h10M1328 746.500h10M1328 749.500h10" stroke="#333"/>
<circle cx="1340" cy="755" r="9" fill="#3a3a3a" stroke="#9a9a9a"/>
<text x="1340" y="759" text-anchor="middle" style="fill:#fff;font-size:11.500px;font-weight:bold">22</text>
</svg>
</body></html>
